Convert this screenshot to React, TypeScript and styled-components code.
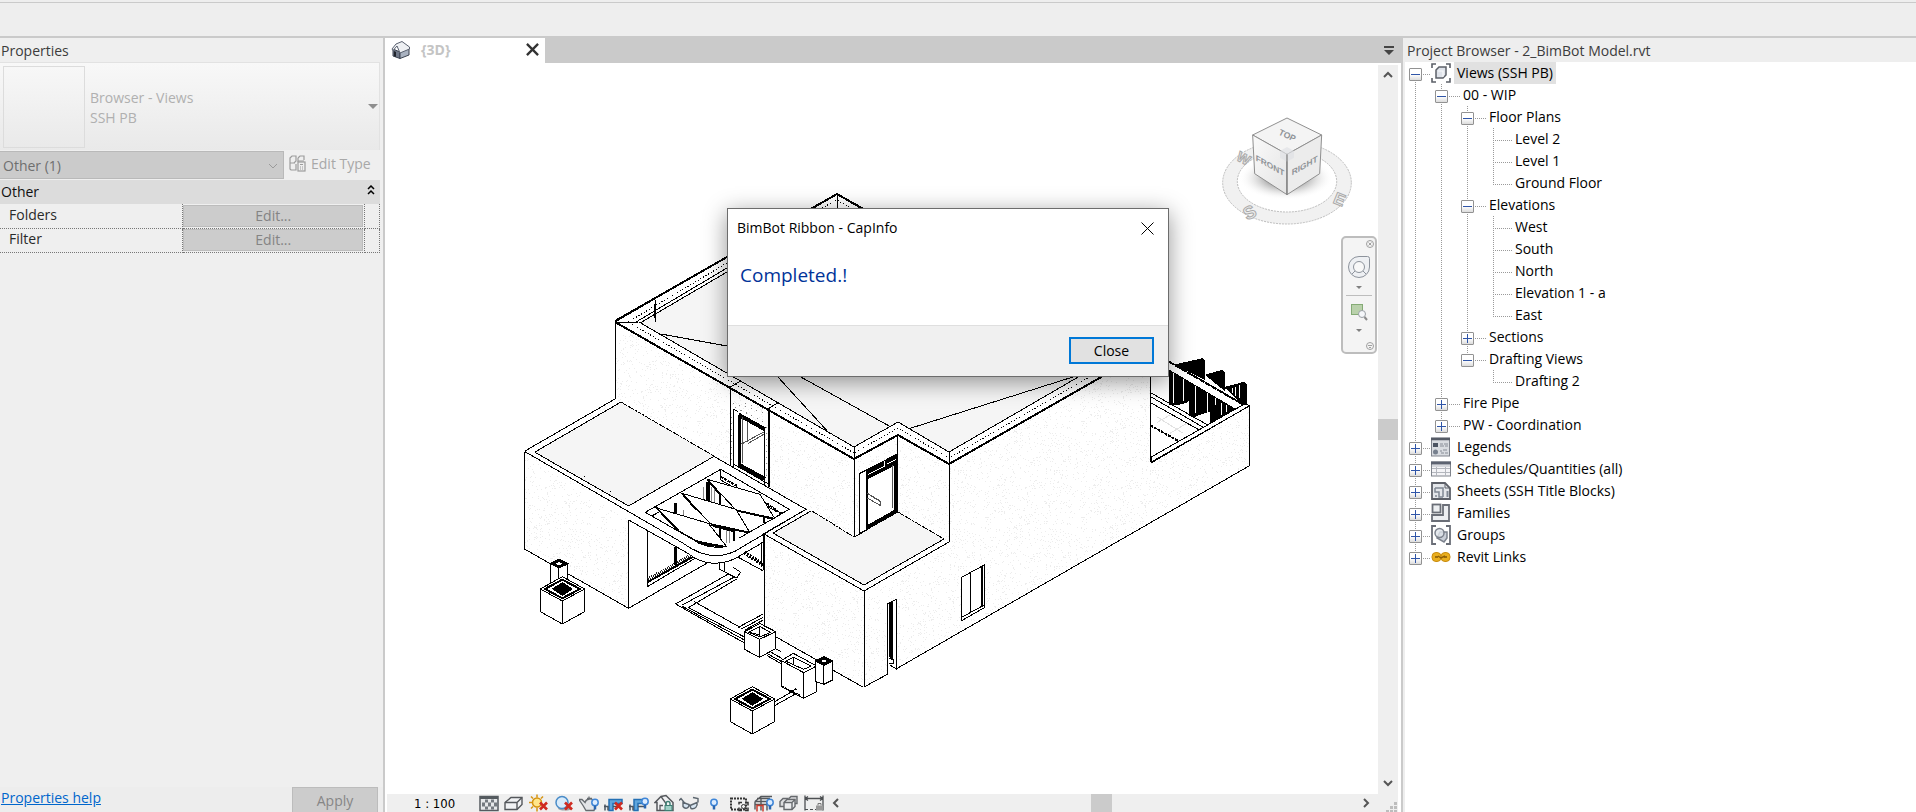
import React from "react";
import styled, { createGlobalStyle, css } from "styled-components";

const GlobalStyle = createGlobalStyle`
  *, *::before, *::after { box-sizing: border-box; }
  body {
    margin: 0;
    overflow: hidden;
    background: #eeeeee;
    color: #1a1a1a;
    font-family: "Open Sans", "Noto Sans", sans-serif;
    font-size: 14px;
    line-height: 20px;
  }
  button, select { font: inherit; color: inherit; }
`;

/* ---------- page frame ---------- */

const Page = styled.div`
  display: flex;
  flex-direction: column;
  height: 100vh;
  position: relative;
`;

const OptionsBar = styled.header`
  flex: none;
  height: 38px;
  padding-top: 2px;
  border-bottom: 2px solid #cacaca;

  &::before {
    content: "";
    display: block;
    border-top: 1px solid #cacaca;
  }
`;

const Workspace = styled.div`
  flex: 1;
  min-height: 0;
  display: flex;
`;

const PanelTitle = styled.h2`
  margin: 0;
  flex: none;
  height: 24px;
  padding: 3px 0 0 1px;
  font-size: 14px;
  font-weight: 400;
  color: #3c3c3c;
  white-space: nowrap;
`;

/* ---------- properties palette ---------- */

const Properties = styled.aside`
  flex: none;
  width: 385px;
  display: flex;
  flex-direction: column;
  border-right: 2px solid #cacaca;
  background: #efefef;
`;

const PaletteBody = styled.div`
  flex: 1;
  width: 380px;
`;

const TypeSelector = styled.button`
  display: flex;
  align-items: center;
  width: 100%;
  height: 88px;
  padding: 0 1px 0 3px;
  border: 1px solid #e2e2e2;
  border-left: 0;
  border-bottom: 0;
  background: linear-gradient(#f8f8f8, #e9e9e9);
  color: #b0b0b0;
  text-align: left;
`;

const TypeThumb = styled.span`
  width: 82px;
  height: 82px;
  border: 1px solid #dcdcdc;
`;

const TypeName = styled.span`
  flex: 1;
  padding: 3px 0 0 5px;
`;

const FilterRow = styled.div`
  display: flex;
  align-items: center;
  height: 30px;
  gap: 5px;
`;

const FilterBox = styled.label`
  width: 284px;
  height: 28px;
  display: flex;
  align-items: center;
  padding: 1px 5px 0 0;
  border: 1px solid #b9b9b9;
  border-left: 0;
  background: #cbcbcb;
  color: #6f6f6f;
`;

const FilterSelect = styled.select`
  flex: 1;
  appearance: none;
  border: 0;
  padding: 0 0 0 3px;
  background: none;
  opacity: 1;
`;

const EditType = styled.button`
  display: flex;
  align-items: center;
  gap: 5px;
  padding: 0 0 3px;
  border: 0;
  background: none;
  color: #a8a8a8;
  white-space: nowrap;
`;

const GroupHeader = styled.div`
  display: flex;
  align-items: center;
  justify-content: space-between;
  height: 24px;
  padding: 0 5px 0 1px;
  background: #dcdcdc;
  color: #101010;
`;

const PropTable = styled.table`
  width: 100%;
  table-layout: fixed;
  border-collapse: collapse;

  th, td {
    height: 24px;
    padding: 0;
    border-right: 1px dotted #777;
    border-bottom: 1px dotted #777;
  }
  th {
    width: 182px;
    padding: 0 0 2px 9px;
    text-align: left;
    font-weight: 400;
    color: #2a2a2a;
  }
  td:last-child { width: 15px; }
`;

const EditButton = styled.button`
  display: block;
  width: 180px;
  height: 22px;
  margin: 0 auto;
  padding: 0;
  border: 1px solid #bcbcbc;
  background: #cccccc;
  color: #848484;
`;

const PaletteFooter = styled.footer`
  display: flex;
  justify-content: space-between;
  height: 25px;
  padding: 0 5px 0 1px;
  background: #ededed;
`;

const HelpLink = styled.a`
  padding-top: 1px;
  color: #0066cc;
`;

const ApplyButton = styled.button`
  width: 86px;
  height: 26px;
  padding: 2px 0 0;
  border: 1px solid #bcbcbc;
  background: #cccccc;
  color: #868686;
`;

/* ---------- drawing view ---------- */

const View = styled.main`
  flex: 1;
  min-width: 0;
  display: flex;
  flex-direction: column;
  background: #ffffff;
`;

const TabStrip = styled.div`
  flex: none;
  display: flex;
  justify-content: space-between;
  align-items: center;
  height: 25px;
  padding-right: 6px;
  background: #cacaca;
`;

const Tab = styled.div`
  display: flex;
  align-items: center;
  width: 160px;
  height: 25px;
  padding: 0 6px 2px;
  gap: 10px;
  background: #fff;
  color: #c4c4c4;
  font-weight: 700;

  span { flex: 1; }
`;

const BareButton = styled.button`
  display: flex;
  align-items: center;
  justify-content: center;
  padding: 0;
  border: 0;
  background: none;
`;

const ViewBody = styled.div`
  flex: 1;
  min-height: 0;
  display: flex;
  padding-right: 3px;
`;

const Canvas = styled.div`
  flex: 1;
  min-width: 0;
  position: relative;
  overflow: hidden;
`;

const ModelDrawing = styled.svg`
  display: block;
  width: 100%;
  height: 100%;
`;

const ViewCube = styled.svg`
  position: absolute;
  top: 52px;
  right: 24px;
`;

const NavBar = styled.nav`
  position: absolute;
  top: 173px;
  right: 1px;
  width: 36px;
  height: 118px;
  display: flex;
  flex-direction: column;
  align-items: center;
  padding: 2px 1px;
  border: 2px solid #bdbdbd;
  border-radius: 5px;
  background: #f4f4f4;
`;

const NavCorner = styled(BareButton)`
  align-self: flex-end;
`;

const NavTool = styled(BareButton)<{ $line?: boolean }>`
  width: 26px;
  flex: 1;
  flex-direction: column;
  justify-content: flex-start;
  gap: 8px;
  padding-top: 8px;
  ${(p) => p.$line && css`border-bottom: 1px solid #bdbdbd;`}
`;

const VScroll = styled.div`
  flex: none;
  width: 20px;
  display: flex;
  flex-direction: column;
  align-items: center;
  justify-content: space-between;
  margin-top: 2px;
  padding: 5px 0 6px;
  background: #efefef;
`;

const ScrollThumb = styled.div<{ $w: number; $h: number }>`
  width: ${(p) => p.$w}px;
  height: ${(p) => p.$h}px;
  background: #cbcbcb;
`;

const StatusRow = styled.div`
  flex: none;
  display: flex;
  align-items: flex-start;
  height: 18px;
  margin: 0 3px 0 2px;
  background: #efefef;
`;

const Scale = styled.button`
  width: 92px;
  height: 18px;
  padding: 0 0 0 27px;
  border: 0;
  background: none;
  text-align: left;
  font-family: "DejaVu Sans Condensed", "DejaVu Sans", sans-serif;
  font-size: 13px;
  line-height: 20px;
  color: #000;
  white-space: nowrap;
`;

const ViewTools = styled.div`
  display: flex;
  gap: 5px;
`;

const HScroll = styled.div`
  flex: 1;
  display: flex;
  align-items: center;
  justify-content: space-between;
  height: 18px;
  margin-left: 7px;
`;

const Grip = styled.svg`
  margin-left: 15px;
`;

/* ---------- project browser ---------- */

const Browser = styled.aside`
  flex: none;
  width: 515px;
  display: flex;
  flex-direction: column;
  border-left: 2px solid #cacaca;
  background: #eeeeee;
  padding-left: 2px;

  ${PanelTitle} { padding-left: 2px; }
`;

const Tree = styled.ul`
  flex: 1;
  margin: 0;
  padding: 0 0 0 10px;
  list-style: none;
  background: #ffffff;
  color: #000;
`;

const TreeRow = styled.li`
  display: flex;
  align-items: center;
  height: 22px;
`;

const dots = "#9a9a9a 0 1px, transparent 1px 2px";

const Guide = styled.span<{ $on: boolean }>`
  width: 26px;
  height: 22px;
  background: ${(p) =>
    p.$on ? `repeating-linear-gradient(${dots}) 0 0 / 1px 100% no-repeat` : "none"};
`;

type Span = "full" | "top" | "bottom";

const spanBg: Record<Span, string> = {
  full: "0 0 / 1px 22px",
  top: "0 0 / 1px 12px",
  bottom: "0 12px / 1px 10px",
};

const Branch = styled.span<{ $w: number; $span: Span }>`
  display: flex;
  align-items: center;
  width: ${(p) => p.$w}px;
  height: 22px;
  padding-top: 2px;
  background:
    repeating-linear-gradient(${dots}) ${(p) => spanBg[p.$span]} no-repeat,
    repeating-linear-gradient(90deg, ${dots}) 0 12px / 100% 1px no-repeat;
`;

const Toggle = styled.button`
  display: flex;
  width: 13px;
  height: 13px;
  margin-left: -6px;
  padding: 0;
  border: 1px solid #929292;
  border-radius: 1px;
  background: linear-gradient(#ffffff 50%, #dcdcdc);
`;

const TreeLabel = styled.span<{ $icon: boolean; $selected: boolean }>`
  height: 22px;
  padding: 1px 3px 0;
  margin-left: ${(p) => (p.$icon ? 3 : 0)}px;
  white-space: nowrap;
  background: ${(p) => (p.$selected ? "#e1e1e1" : "transparent")};
`;

/* ---------- message window ---------- */

const Dialog = styled.section`
  position: absolute;
  top: 208px;
  left: 727px;
  width: 442px;
  display: flex;
  flex-direction: column;
  border: 1px solid #6c6c6c;
  background: #fff;
  color: #000;
  box-shadow: 0 5px 22px rgba(0, 0, 0, 0.42);
`;

const DialogTitle = styled.header`
  display: flex;
  justify-content: space-between;
  align-items: center;
  height: 38px;
  padding: 0 14px 0 9px;
`;

const DialogText = styled.p`
  margin: 0;
  height: 78px;
  padding: 16px 12px;
  font-size: 19px;
  line-height: 24px;
  color: #003399;
`;

const DialogFooter = styled.footer`
  display: flex;
  justify-content: flex-end;
  height: 51px;
  padding: 11px 14px;
  border-top: 1px solid #dfdfdf;
  background: #f0f0f0;
`;

const CloseButton = styled.button`
  width: 85px;
  height: 27px;
  padding: 0;
  border: 2px solid #0078d7;
  background: #e1e1e1;
`;

/* ---------- tree icons ---------- */

const TreeIcon = ({ name }: { name: string }) => (
  <svg width="20" height="20" viewBox="0 0 20 20" fill="none" aria-hidden="true">
    {name === "views" && (
      <>
        <path d="M1 5V1h4M15 1h4v4M19 15v4h-4M5 19H1v-4" stroke="#5c6068" strokeWidth="1.600" />
        <path d="M5 7l3-3h7v8l-3 3H5z" fill="#dfe3ea" stroke="#5c6068" strokeWidth="1.500" />
        <path d="M7 8h5v6" stroke="#f8f9fb" strokeWidth="1.200" />
      </>
    )}
    {name === "legends" && (
      <>
        <rect x=".5" y="1" width="18" height="18" fill="#d9dce1" stroke="#80848d" />
        <path d="M0 2h19" stroke="#555b66" strokeWidth="2.500" />
        <rect x="2" y="6" width="5" height="4" fill="#4c5462" />
        <circle cx="4.500" cy="15" r="2.500" fill="#77808e" />
        <path d="M9 7h3M13 7h4M9 9h4M14 9h3M9 14h2M12 13h4M10 16h3M14 16h3" stroke="#878c96" />
      </>
    )}
    {name === "schedules" && (
      <>
        <rect x=".5" y="3" width="19" height="14" fill="#f4f4f7" stroke="#80848c" />
        <path d="M0 4h20" stroke="#5c6270" strokeWidth="3" />
        <path d="M5.500 6v11M14.500 6v11M1 9.500h18M1 13.500h18" stroke="#b3b6bd" />
        <path d="M1 7h18" stroke="#d5d7dc" strokeWidth="2" />
      </>
    )}
    {name === "sheets" && (
      <>
        <path d="M1 2h13l5 5v11H1z" fill="#e3e6ea" stroke="#5c6068" strokeWidth="1.800" />
        <path d="M14 2v5h5" stroke="#5c6068" />
        <path d="M4 7h8v9M4 7v4h4v5h4M4 15h2" stroke="#808894" strokeWidth="1.500" />
        <path d="M16.500 10v6" stroke="#808894" strokeWidth="2" />
      </>
    )}
    {name === "families" && (
      <>
        <path d="M12 2h6v16H1v-6h11z" fill="#eceef1" stroke="#6a6e77" strokeWidth="1.800" />
        <rect x="1.500" y="1.500" width="8" height="8" fill="#eceef1" stroke="#6a6e77" strokeWidth="1.800" />
      </>
    )}
    {name === "groups" && (
      <>
        <path d="M5 1H1v18h4M15 1h4v18h-4" stroke="#6a6e77" strokeWidth="1.800" />
        <path d="M9 7h7v6l-3 4-7-4z" fill="#c9ced7" stroke="#7c828d" strokeWidth="1.500" />
        <circle cx="8.500" cy="8" r="4.500" fill="#dfe3ea" fillOpacity=".8" stroke="#7c828d" strokeWidth="1.500" />
      </>
    )}
    {name === "links" && (
      <>
        <rect x="1" y="5.500" width="9" height="9" rx="4" fill="#e9ae1e" stroke="#c98c10" />
        <rect x="10" y="5.500" width="9" height="9" rx="4" fill="#e9ae1e" stroke="#c98c10" />
        <path d="M4 10h3M13 10h3" stroke="#9b6c0c" strokeWidth="2" />
        <path d="M7 9l3 2 4-2" stroke="#8d5f08" strokeWidth="1.500" />
      </>
    )}
  </svg>
);

/* ---------- tree data ---------- */

type Item = {
  text: string;
  level: number;
  icon?: string;
  toggle?: "+" | "-";
  guides: boolean[];
  span: Span;
};

const leaf = (text: string, span: Span = "full", third = true): Item => ({
  text,
  level: 3,
  guides: [true, true, third],
  span,
});
const root = (text: string, icon: string, span: Span = "full"): Item => ({
  text,
  level: 0,
  icon,
  toggle: "+",
  guides: [],
  span,
});
const branch = (text: string, level: number, toggle: "+" | "-", span: Span = "full"): Item => ({
  text,
  level,
  toggle,
  guides: Array(level).fill(true),
  span,
});

const items: Item[] = [
  { ...root("Views (SSH PB)", "views", "bottom"), toggle: "-" },
  branch("00 - WIP", 1, "-"),
  branch("Floor Plans", 2, "-"),
  leaf("Level 2"),
  leaf("Level 1"),
  leaf("Ground Floor", "top"),
  branch("Elevations", 2, "-"),
  leaf("West"),
  leaf("South"),
  leaf("North"),
  leaf("Elevation 1 - a"),
  leaf("East", "top"),
  branch("Sections", 2, "+"),
  branch("Drafting Views", 2, "-", "top"),
  leaf("Drafting 2", "top", false),
  branch("Fire Pipe", 1, "+"),
  branch("PW - Coordination", 1, "+", "top"),
  root("Legends", "legends"),
  root("Schedules/Quantities (all)", "schedules"),
  root("Sheets (SSH Title Blocks)", "sheets"),
  root("Families", "families"),
  root("Groups", "groups"),
  root("Revit Links", "links", "top"),
];

const ProjectTree = () => (
  <Tree>
    {items.map((it) => (
      <TreeRow key={it.text}>
        {it.guides.map((on, i) => (
          <Guide key={i} $on={on} />
        ))}
        <Branch $w={it.icon ? 16 : 19} $span={it.span}>
          {it.toggle && (
            <Toggle aria-label={`Toggle ${it.text}`} aria-expanded={it.toggle === "-"}>
              <svg width="11" height="11" viewBox="0 0 11 11" stroke="#2f55a8" aria-hidden="true">
                <path d={it.toggle === "-" ? "M1 5.500h9" : "M1 5.500h9M5.500 1v9"} />
              </svg>
            </Toggle>
          )}
        </Branch>
        {it.icon && <TreeIcon name={it.icon} />}
        <TreeLabel $icon={!!it.icon} $selected={it.icon === "views"}>
          {it.text}
        </TreeLabel>
      </TreeRow>
    ))}
  </Tree>
);

/* ---------- view control icons ---------- */

const redX = <path d="M11 8l7 7M18 8l-7 7" stroke="#cf2a20" strokeWidth="2.600" />;
const bulb = (x: number, y: number) => (
  <g transform={`translate(${x} ${y})`}>
    <circle cx="4" cy="4" r="3.200" fill="#dcecff" stroke="#3f86d8" strokeWidth="1.500" />
    <path d="M4 7v4" stroke="#2a66b0" strokeWidth="2.500" />
  </g>
);
const pipes = (
  <>
    <path d="M5 16V5h13v4H9v7z" fill="#5fa6dc" stroke="#2470b4" strokeWidth="1.500" />
    <path d="M0 12h4v4M1 10v6M9 12h7" stroke="#4a5560" strokeWidth="1.500" />
  </>
);

const viewTools: { label: string; art: React.ReactNode }[] = [
  {
    label: "Detail level",
    art: (
      <>
        <rect x="1" y="2" width="18" height="14" fill="#e6e8ea" stroke="#555b60" strokeWidth="1.500" />
        <path d="M1 3h18" stroke="#555b60" strokeWidth="3" />
        <path d="M6 5h3v3H6zM12 5h3v3h-3zM9 8h3v4H9zM3 8h3v4H3zM15 8h3v4h-3zM6 12h3v3H6zM12 12h3v3h-3z" fill="#747a80" />
      </>
    ),
  },
  {
    label: "Visual style",
    art: (
      <>
        <path d="M1 8l6-5h11v7l-5 5H1z" fill="#f1f2f4" stroke="#55585c" strokeWidth="1.400" />
        <path d="M1 8h12v7M13 8l5-5" stroke="#55585c" strokeWidth="1.400" />
      </>
    ),
  },
  {
    label: "Sun path",
    art: (
      <>
        <path d="M8 0v3M8 13v4M0 8h3M2 2l2 2M14 2l-2 2M2 14l2-2" stroke="#d69411" strokeWidth="1.500" />
        <circle cx="8" cy="8" r="4.500" fill="#ffe68a" stroke="#d69411" strokeWidth="1.500" />
        {redX}
      </>
    ),
  },
  {
    label: "Shadows",
    art: (
      <>
        <ellipse cx="11" cy="14" rx="7" ry="2" fill="#9ea3a8" />
        <circle cx="8" cy="8" r="6" fill="#d8ebfb" stroke="#4a8cc8" strokeWidth="1.500" />
        {redX}
      </>
    ),
  },
  {
    label: "Rendering dialog",
    art: (
      <>
        <path d="M0 5h3l3 3c1-4 7-5 10-1l1 3-2 6H7L4 11z" fill="#e2e4e7" stroke="#666b70" strokeWidth="1.300" />
        <path d="M8 4h5M10 2v2" stroke="#666b70" strokeWidth="1.300" />
        {bulb(12, 4)}
      </>
    ),
  },
  { label: "Crop view", art: <>{pipes}{redX}</> },
  { label: "Crop region", art: <>{pipes}{bulb(12, 3)}</> },
  {
    label: "Lock 3D view",
    art: (
      <>
        <path d="M1 8l6-6 5-1 7 7v8H3V8z" fill="#f0f1f3" stroke="#55585c" strokeWidth="1.500" />
        <path d="M7 2l5 7v7M6 16v-5h3" stroke="#55585c" strokeWidth="1.300" />
        <path d="M12 11V9a2 2 0 014 0v2" stroke="#3d8074" strokeWidth="1.400" />
        <rect x="11" y="11" width="7" height="5" fill="#9fd0c6" stroke="#3d8074" />
      </>
    ),
  },
  {
    label: "Temporary hide",
    art: (
      <>
        <path d="M0 6l2-2 4 5M14 3l5 1v4" stroke="#5c666f" strokeWidth="1.400" />
        <path d="M4 8l6 2c0 4-4 5-6 2zM11 11l7-3c1 4-2 7-6 6z" fill="#d8e6f2" stroke="#5c666f" strokeWidth="1.400" />
      </>
    ),
  },
  { label: "Reveal hidden", art: bulb(6, 4) },
  {
    label: "Worksharing",
    art: (
      <>
        <rect x="2" y="4" width="15" height="11" stroke="#333" strokeWidth="2" strokeDasharray="2 1" />
        <path d="M10 10V8h3M16 8h3v3M19 13v3h-3M10 13v3h3" stroke="#333" strokeWidth="1.500" />
        <circle cx="14.500" cy="12" r="2" stroke="#333" />
      </>
    ),
  },
  {
    label: "Analytical model",
    art: (
      <>
        <path d="M1 7l6-5h11M1 7h12M1 7v8M7 3v13M13 7v9M3 4h13M1 10h12" stroke="#55585c" strokeWidth="1.400" />
        <path d="M3 10v7M9 10v7M3 11h6" stroke="#cc3b2c" strokeWidth="1.500" />
        {bulb(12, 4)}
      </>
    ),
  },
  {
    label: "Displacement sets",
    art: (
      <>
        <path d="M1 7l3-3h5v8H1zM10 4l2-2h6v7h-4" fill="#dcdddf" stroke="#66696d" strokeWidth="1.400" />
        <path d="M5 8l3-3h8v7l-3 3H5z" fill="#ebecee" stroke="#66696d" strokeWidth="1.400" />
        <path d="M5 8h8v7M13 8l3-3" stroke="#66696d" strokeWidth="1.400" />
      </>
    ),
  },
  {
    label: "Constraints",
    art: (
      <>
        <path d="M1 1v15M19 1v15M1 4h18M1 4l3-2M1 4l3 2M19 4l-3-2M19 4l-3 2" stroke="#4c4f52" strokeWidth="1.300" />
        <path d="M1 15h12" stroke="#4c4f52" strokeDasharray="3 2" />
        <path d="M14 11V9h3v2" stroke="#777" />
        <rect x="12" y="11" width="7" height="5" fill="#999" />
      </>
    ),
  },
];

/* ---------- the house ---------- */

/* Plaster grain: a fixed pseudo-random scatter of single-pixel dots. */
const TILE = 96;
const grain = (() => {
  let seed = 7;
  const next = () => (seed = (seed * 16807) % 2147483647) % TILE;
  return Array.from({ length: 620 }, () => `M${next()} ${next()}h1v1h-1z`).join("");
})();

const House = () => (
  <ModelDrawing viewBox="385 63 993 731" preserveAspectRatio="xMidYMid meet" role="img" aria-label="3D view of a house">
    <defs>
      <pattern id="plaster" width={TILE} height={TILE} patternUnits="userSpaceOnUse">
        <rect width={TILE} height={TILE} fill="#fff" />
        <path d={grain} fill="#ededed" />
      </pattern>
      <style>{`.l path, .l line { vector-effect: non-scaling-stroke }`}</style>
    </defs>

    <g className="l" shapeRendering="crispEdges" fill="none" stroke="#000" strokeWidth="1">
      {/* surfaces */}
      <g stroke="none">
        <path
          fill="url(#plaster)"
          d="M615 322L854 459 898 435 949 464 1103 376H1151V463L1249 405V466L896 669 864 687 764 632V534L730 516 629 608 525 549V452L615 400z"
        />
        <path fill="#f5f5f5" d="M639 322L727 272 837 208 1079 350V376L949 452 898 422 854 447z" />
        <path fill="#f5f5f5" d="M535 452L621 402 714 456 629 506z" />
        <path fill="#f5f5f5" d="M773 533L812 511 855 537 898 512 944 539 864 585z" />
        <path fill="#fff" d="M615 322L837 193 863 208 837 208 639 322 854 447 898 422 949 452 1079 376H1103L949 464 898 435 854 459z" />
        <path fill="#fff" d="M629 506L714 456 806 510 764 534V632L700 690 629 608V520L560 480z" />
      </g>

      {/* main roof */}
      <path d="M837 208V194M811 208L837 194 863 208M727 257L615 322V399M615 322H638M727 268L636 322M727 272L640 323" />
      <path strokeWidth="2" d="M811 209L837 194 863 209M727 257L615 321" />
      <path strokeDasharray="1 2" d="M727 263L628 322 854 453 898 428 949 458 1091 376M822 208L837 200 851 208" />
      <path d="M639 322L854 447 898 422 949 452 1080 376M854 447V537M897 435V512M949 452V542" />
      <path strokeWidth="2" d="M615 322L854 459 898 435 949 464 1103 376" />
      <path d="M661 334L727 346M777 376L830 434M799 376L891 427M908 429L1076 376M730 387L741 381M768 409L779 402" />
      <path strokeWidth="2" d="M655 304V318" />
      <path d="M655 300V322" />

      {/* upper walls */}
      <path d="M730 388V466M769 410V487M615 399L525 451M621 402L535 452" />
      <path strokeDasharray="3 1" d="M621 402L714 456M812 511L854 537M898 512L944 539" />

      {/* right wing */}
      <path d="M949 542L864 591 764 534M944 539L864 585 773 533 811 511M764 534V626M864 591V687M864 687L888 674M896 669L1249 466V405M1151 376V463L1249 406M1151 457L1243 405M854 537L867 530" />

      <g transform="translate(840 340) scale(.3333)">
        {/* upper right door */}
        <path fill="#fff" d="M60 580V400L172 342V517z" />
        <path fill="#000" d="M80 392L172 342V372L80 417z" />
        <path stroke="#fff" d="M84 404L134 378V364M142 372L168 358" />
        <path strokeWidth="2" d="M81 392V570M80 566L172 514M80 560L172 508" />
        <path strokeWidth="4" d="M167 372V516" />
        <path stroke="#555" d="M158 376V505M82 460L122 484V497L82 474M90 466L120 484" />
        {/* slit window */}
        <path fill="#fff" d="M143 1003V792L169 778V987L150 975" />
        <path strokeWidth="3" d="M156 786V958" />
        <path d="M148 792V950M146 955L162 960V970H146" />
        {/* side window */}
        <path fill="#fff" d="M365 712L433 675V803L365 842z" />
        <path d="M391 698V820M365 832L433 795" />
        <path strokeWidth="2" d="M426 680V802" />
        {/* rear terrace */}
        <path fill="#fff" stroke="none" d="M933 100L1215 195 933 350z" />
        <path fill="#000" d="M1008 74L1088 56 1095 63V118zM1098 105L1147 91 1155 98V152zM1155 142L1212 127 1220 135V192L1205 190z" />
        <path fill="#000" d="M990 88L1048 118V178L1038 188 1005 195 990 195zM1050 120L1110 150V213L1082 222 1060 232 1048 225zM1113 155L1190 202 1113 248z" />
        <path stroke="#fff" d="M1000 100V190M1032 108V182M1066 128V218M1102 150V215M1128 170V195M1146 190V226M1160 188V215M1178 144V160M1188 140V168M1198 136V175" />
        <path fill="#fff" d="M987 65L1212 193 1185 207 987 90z" />
        <path strokeWidth="2" strokeDasharray="6 1" d="M987 65L1210 194" />
        <path d="M932 158L1105 256M932 170L1090 262M932 188L1078 270M1205 190L1220 193 1228 198M932 352L1210 194M932 367L1228 198M932 100V367" />
        <path strokeWidth="2" strokeDasharray="3 1" d="M932 256L1018 305" />
        <path stroke="#e2e2e2" d="M950 230L1030 280M990 225L950 248M1040 250L990 280" />
      </g>

      <g transform="translate(500 380) scale(.3333)">
        {/* left wing */}
        <path fill="#fff" d="M642 229L386 378M700 260L918 388 640 527" stroke="none" />
        <path d="M73 215V507L386 685V420M386 685L620 550M105 217L386 378 642 229M642 229L918 388 790 462" />
        <path d="M75 215L545 487Q600 527 645 527 690 527 725 502L918 388" />
        <path d="M386 420L560 518Q600 548 640 550 690 550 725 524L790 487" />
        <path d="M442 453V620L585 535M436 397L662 268 868 388 718 474M436 397L590 485Q620 503 665 502M455 408L480 395M662 268V300L830 395M830 395L850 398" />
        <path strokeWidth="5" strokeDasharray="1 1" stroke="#222" d="M445 600L530 552 575 526" />
        <path strokeWidth="2" d="M443 606L580 530" />
        <path strokeWidth="3" d="M528 500V556M528 368V400" />
        <path strokeWidth="4" d="M625 305V362" />
        <path strokeWidth="2" d="M660 340V372M660 440V475M703 448V482M792 410V430" />
        <path stroke="#888" d="M612 320V360M636 320V370M645 325V370M680 450V490M690 452V488M552 390V408" />
        <path d="M790 462V570M784 487V560M715 532L790 573" />
        <path strokeWidth="4" strokeDasharray="2 1" d="M733 518L790 554" />
        <path strokeWidth="2" strokeDasharray="3 1" d="M662 290L715 320M800 370L845 402" />
        {/* pergola blades */}
        <path fill="#fff" d="M622 298L780 343 824 415 708 390z" />
        <path fill="#fff" d="M546 340L708 388 750 458 632 432z" />
        <path fill="#fff" d="M470 384L625 430 680 500 592 484 535 452z" />
        <path strokeWidth="2" d="M708 391L818 416M632 433L748 458M590 484L668 502M622 298L662 345M546 340L590 390M470 384L535 452" />
        <path strokeWidth="3" d="M596 487L630 498M640 437L700 452" />

        {/* upper left door */}
        <path fill="#fff" stroke="none" d="M701 88L795 135V310L701 262z" />
        <path d="M701 88V262M701 88L715 95M806 88V320M795 140V316M700 252L806 312" />
        <path strokeWidth="3" d="M719 104V258" />
        <path strokeWidth="4" d="M716 104L795 148M716 254L795 297" />
        <path stroke="#555" d="M742 125V186M725 192L793 155M745 190L793 162M728 110V250" />
        <path stroke="#888" strokeDasharray="1 5" d="M700 70L800 100M706 82L800 130M735 70L800 90M696 110V250M801 140V300" />

        {/* garden path */}
        <path d="M660 548V568L710 594 722 577 700 562M673 550V574M527 672L685 582 710 594M545 676L705 590M565 683L712 596M527 672L735 790M545 678L735 781M565 683L735 772M583 665L720 742M715 742L790 702M722 748L790 712M735 750L790 720M800 820L845 845M800 826L845 852M805 812L845 835M827 770L950 840M827 806L844 815M998 870L1090 922M824 965L885 930 955 900M824 977L890 940" />
      </g>

      {/* planters */}
      <g transform="translate(500 380) scale(.3333)" fill="#fff">
        <path d="M151 608V550L177 537 203 550V608zM177 562V600" />
        <path strokeWidth="3" d="M157 551L177 541 198 551 177 561z" />
        {[[187, 627], [757, 957]].map(([x, y]) => (
          <g key={x} transform={`translate(${x} ${y})`}>
            <path d="M-66 0L0 -37 67 0V68L0 105 -66 68zM-66 0L0 36 67 0M0 36V105" />
            <path strokeWidth="2" d="M-52 0L0 -28 53 0 0 28z" />
            <path fill="#000" d="M-29 0L0 -19 30 0 0 19z" />
          </g>
        ))}
        <path d="M733 755L780 731 827 755V806L779 832 733 808zM733 755L779 778 827 755M779 778V832M746 757L780 740 812 757 780 771zM780 740V766L750 757" />
        <path d="M844 842L880 820 950 858V935L911 955 844 920zM844 842L911 878 950 858M911 878V955M858 844L880 832 934 858 911 868zM880 832V852" />
        <path strokeWidth="2" strokeDasharray="2 1" d="M846 920L900 946M868 938L890 926" />
        <path d="M948 905V843L972 830 998 843V900L972 913zM972 856V913" />
        <path strokeWidth="3" d="M953 843L972 833 992 843 972 853z" />
      </g>
      <path d="M584 476V477M610 491V492" />
    </g>
  </ModelDrawing>
);

const Cube = () => (
  <ViewCube width="134" height="112" viewBox="60 75 402 336" role="img" aria-label="View cube">
    <defs>
      <radialGradient id="cubeShadow">
        <stop offset=".3" stopColor="#8c8c8c" />
        <stop offset="1" stopColor="#ffffff" stopOpacity="0" />
      </radialGradient>
      <linearGradient id="cubeLeft" x2="1" y2="1">
        <stop offset="0" stopColor="#fafafa" />
        <stop offset="1" stopColor="#e4e4e4" />
      </linearGradient>
    </defs>
    <ellipse cx="261" cy="278" rx="193" ry="124" fill="#f1f1f1" stroke="#bcbcbc" strokeWidth="3" strokeDasharray="6 3" />
    <ellipse cx="261" cy="274" rx="149" ry="92" fill="#fff" stroke="#bcbcbc" strokeWidth="3" strokeDasharray="6 3" />
    <ellipse cx="258" cy="264" rx="142" ry="66" fill="url(#cubeShadow)" />
    <g strokeLinejoin="round" stroke="#8f8f8f" strokeWidth="3">
      <path d="M158 135L261 84 365 135 261 193z" fill="#f4f4f4" />
      <path d="M158 135L261 193V314L164 251z" fill="url(#cubeLeft)" />
      <path d="M365 135L261 193V314L359 251z" fill="#ececec" />
    </g>
    <path d="M240 183L261 171 282 183V203L261 215 240 203z" fill="#dfe1e6" fillOpacity=".7" />
    <path d="M261 193V314" stroke="#777" strokeWidth="3" />
    <g fontFamily="'Liberation Sans Narrow', 'Liberation Sans', sans-serif" fontWeight="700" fill="#8f9397" textAnchor="middle">
      <text transform="translate(210 235) skewY(29)" fontSize="25">FRONT</text>
      <text transform="translate(314 235) skewY(-29)" fontSize="25">RIGHT</text>
      <text transform="translate(258 144) rotate(26)" fontSize="26">TOP</text>
    </g>
    <g fontFamily="Liberation Sans, sans-serif" fill="#ececec" stroke="#a9a9a9" strokeWidth="3" fontWeight="700" textAnchor="middle">
      <text transform="translate(124 218) rotate(28)" fontSize="42">W</text>
      <text transform="translate(158 384) rotate(-28)" fontSize="54">S</text>
      <text transform="translate(412 344) rotate(22)" fontSize="50">E</text>
    </g>
  </ViewCube>
);

const Caret = ({ size = 6, color = "#808080" }) => (
  <svg width={size} height={size / 2} viewBox="0 0 6 3" aria-hidden="true">
    <path d="M0 0h6L3 3z" fill={color} />
  </svg>
);

const Chevron = ({ d }: { d: string }) => (
  <svg width="10" height="10" viewBox="0 0 10 10" fill="none" stroke="#555" strokeWidth="2" aria-hidden="true">
    <path d={d} />
  </svg>
);

export default function App() {
  return (
    <Page>
      <GlobalStyle />
      <OptionsBar />
      <Workspace>
        <Properties>
          <PanelTitle>Properties</PanelTitle>
          <PaletteBody>
            <TypeSelector disabled>
              <TypeThumb />
              <TypeName>
                Browser - Views
                <br />
                SSH PB
              </TypeName>
              <Caret size={10} color="#8e8e8e" />
            </TypeSelector>
            <FilterRow>
              <FilterBox>
                <FilterSelect disabled aria-label="Category filter">
                  <option>Other (1)</option>
                </FilterSelect>
                <svg width="10" height="6" viewBox="0 0 10 6" fill="none" stroke="#9a9a9a" aria-hidden="true">
                  <path d="M1 1l4 4 4-4" />
                </svg>
              </FilterBox>
              <EditType disabled>
                <svg width="17" height="17" viewBox="0 0 17 17" fill="none" stroke="#9c9c9c" strokeWidth="1.200" aria-hidden="true">
                  <path d="M1 3l2-2h4v5l-2 2H1zM1 8v6l1 1h5V9M9 3l2-2h4v4M9 3v4M1 8h5M9 6h6" />
                  <rect x="9" y="7" width="7" height="9" />
                  <path d="M11 9.500h3M11 12h1M13 12h1M11 14h1M13 14h1" />
                </svg>
                Edit Type
              </EditType>
            </FilterRow>
            <GroupHeader>
              Other
              <BareButton aria-label="Collapse group">
                <svg width="8" height="14" viewBox="0 0 8 14" fill="none" stroke="#000" strokeWidth="1.500" aria-hidden="true">
                  <path d="M1 4l3-3 3 3M1 9l3-3 3 3" />
                </svg>
              </BareButton>
            </GroupHeader>
            <PropTable>
              <tbody>
                {["Folders", "Filter"].map((name) => (
                  <tr key={name}>
                    <th scope="row">{name}</th>
                    <td>
                      <EditButton disabled aria-label={`Edit ${name}`}>Edit...</EditButton>
                    </td>
                    <td />
                  </tr>
                ))}
              </tbody>
            </PropTable>
          </PaletteBody>
          <PaletteFooter>
            <HelpLink href="#help">Properties help</HelpLink>
            <ApplyButton disabled>Apply</ApplyButton>
          </PaletteFooter>
        </Properties>

        <View>
          <TabStrip>
            <Tab>
              <svg width="20" height="18" viewBox="0 0 20 18" aria-hidden="true" strokeLinejoin="round">
                <path d="M2 8l7 3v6.500l-7-2.500z" fill="#6f7787" stroke="#3c4350" />
                <path d="M9 11l9-4v7l-9 3.500z" fill="#a9b2c0" stroke="#3c4350" />
                <path d="M3 10v5l2 1v-5z" fill="#20242c" />
                <path d="M1 8l4-5 6-2.500L18.500 6v2L9 12 6 5 2 9.500z" fill="#eef0f3" stroke="#5a6170" />
              </svg>
              <span>{"{3D}"}</span>
              <BareButton aria-label="Close tab">
                <svg width="13" height="13" viewBox="0 0 14 14" stroke="#333" strokeWidth="2.500" aria-hidden="true">
                  <path d="M1 1l12 12M13 1L1 13" />
                </svg>
              </BareButton>
            </Tab>
            <BareButton aria-label="List tabs">
              <svg width="12" height="10" viewBox="0 0 12 10" fill="#444" aria-hidden="true">
                <path d="M1 0h10v2H1zM1 4h10L6 9z" />
              </svg>
            </BareButton>
          </TabStrip>
          <ViewBody>
            <Canvas>
              <House />
              <Cube />
              <NavBar aria-label="Navigation bar">
                <NavCorner aria-label="Close navigation bar">
                  <svg width="8" height="8" viewBox="0 0 8 8" fill="none" stroke="#a0a0a0" aria-hidden="true">
                    <circle cx="4" cy="4" r="3.500" />
                    <path d="M2.500 2.500l3 3M5.500 2.500l-3 3" />
                  </svg>
                </NavCorner>
                <NavTool $line aria-label="Steering wheel">
                  <svg width="22" height="22" viewBox="0 0 22 22" fill="#eef0f3" stroke="#8d939c" aria-hidden="true">
                    <path d="M11 .5h8.500a2 2 0 012 2V11A10.500 10.500 0 1111 .5z" />
                    <circle cx="11" cy="11" r="5.500" fill="#f8f8f8" />
                    <path d="M7 15l-3 3M15 15l3 3" />
                  </svg>
                  <Caret />
                </NavTool>
                <NavTool aria-label="Zoom region">
                  <svg width="17" height="17" viewBox="0 0 17 17" fill="none" aria-hidden="true">
                    <rect x=".5" y=".5" width="11" height="10" fill="#b9d1ab" stroke="#85ab76" />
                    <circle cx="11" cy="10" r="3.500" fill="#f5f7fa" stroke="#9a9fa5" />
                    <path d="M13.500 13l2.500 3" stroke="#8b8b8b" strokeWidth="2" />
                  </svg>
                  <Caret />
                </NavTool>
                <NavCorner aria-label="Navigation bar options">
                  <svg width="8" height="8" viewBox="0 0 8 8" fill="none" stroke="#a0a0a0" aria-hidden="true">
                    <circle cx="4" cy="4" r="3.500" />
                    <path d="M2 3.500h4M3 5.500h2" />
                  </svg>
                </NavCorner>
              </NavBar>
            </Canvas>
            <VScroll>
              <Chevron d="M1 7l4-4 4 4" />
              <ScrollThumb $w={20} $h={21} />
              <Chevron d="M1 3l4 4 4-4" />
            </VScroll>
          </ViewBody>
          <StatusRow>
            <Scale>1 : 100</Scale>
            <ViewTools>
              {viewTools.map((t) => (
                <BareButton key={t.label} aria-label={t.label}>
                  <svg width="20" height="18" viewBox="0 0 20 17" fill="none" aria-hidden="true">
                    {t.art}
                  </svg>
                </BareButton>
              ))}
            </ViewTools>
            <HScroll>
              <Chevron d="M7 1L3 5l4 4" />
              <ScrollThumb $w={21} $h={18} />
              <Chevron d="M3 1l4 4-4 4" />
            </HScroll>
            <Grip width="12" height="18" viewBox="0 0 12 18" fill="#bdbdbd" aria-hidden="true">
              <path d="M8 8h3v3H8zM8 12h3v3H8zM4 12h3v3H4zM8 16h3v2H8zM4 16h3v2H4zM0 16h3v2H0z" />
            </Grip>
          </StatusRow>
        </View>

        <Browser>
          <PanelTitle>Project Browser - 2_BimBot Model.rvt</PanelTitle>
          <ProjectTree />
        </Browser>
      </Workspace>

      <Dialog role="dialog" aria-label="BimBot Ribbon - CapInfo">
        <DialogTitle>
          BimBot Ribbon - CapInfo
          <BareButton aria-label="Close window">
            <svg width="13" height="13" viewBox="0 0 13 13" stroke="#000" aria-hidden="true">
              <path d="M.5 .5l12 12M12.500 .5l-12 12" />
            </svg>
          </BareButton>
        </DialogTitle>
        <DialogText>Completed.!</DialogText>
        <DialogFooter>
          <CloseButton>Close</CloseButton>
        </DialogFooter>
      </Dialog>
    </Page>
  );
}
